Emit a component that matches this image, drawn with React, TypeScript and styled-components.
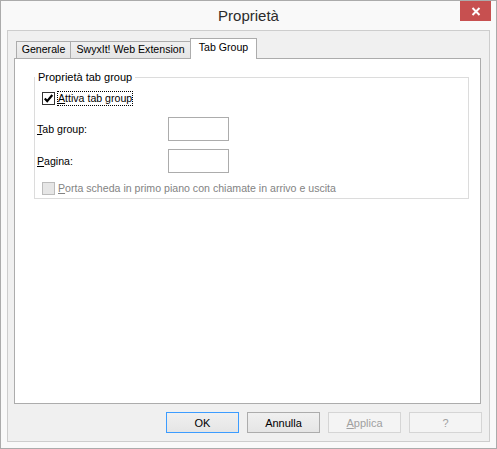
import styled, { createGlobalStyle } from 'styled-components';

const GlobalStyle = createGlobalStyle`
    html, body {
        margin: 0;
        padding: 0;
        background: #ffffff;
    }
    body {
        font-family: "Liberation Sans", Arial, sans-serif;
        font-size: 10.6px;
        color: #000000;
    }
    * {
        box-sizing: border-box;
    }
`;

const tabs = [
    { label: 'Generale', width: 55 },
    { label: 'SwyxIt! Web Extension', width: 121 },
    { label: 'Tab Group', width: 67, active: true },
];

const buttons = [
    { label: 'OK', isDefault: true },
    { label: 'Annulla' },
    { label: 'Applica', mnemonic: true, disabled: true },
    { label: '?', disabled: true },
];

const CheckIcon = () => (
    <svg width="11" height="11" viewBox="0 0 11 11">
        <path d="M1.8 5.6 L4.2 8.2 L9.3 2" fill="none" stroke="#000" strokeWidth="2.2" />
    </svg>
);

const CloseIcon = () => (
    <svg width="10" height="9" viewBox="0 0 10 9">
        <path d="M1.5 1 L8.5 8 M8.5 1 L1.5 8" stroke="#fff" strokeWidth="2" />
    </svg>
);

const Proprieta = () => {
    return (
        <Window>
            <TitleBar>
                <span />
                <Title>Proprietà</Title>
                <CloseButton>
                    <CloseIcon />
                </CloseButton>
            </TitleBar>
            <Client>
                <TabControl>
                    <TabRow>
                        {tabs.map((tab) => (
                            <Tab key={tab.label} $active={tab.active} $width={tab.width}>
                                {tab.label}
                            </Tab>
                        ))}
                    </TabRow>
                    <TabPanel>
                        <GroupBox>
                            <Legend>Proprietà tab group</Legend>
                            <CheckRow>
                                <CheckBox>
                                    <CheckIcon />
                                </CheckBox>
                                <CheckLabel $focused>
                                    <u>A</u>ttiva tab group
                                </CheckLabel>
                            </CheckRow>
                            <FieldRow>
                                <FieldLabel>
                                    <u>T</u>ab group:
                                </FieldLabel>
                                <TextBox />
                            </FieldRow>
                            <FieldRow>
                                <FieldLabel>
                                    <u>P</u>agina:
                                </FieldLabel>
                                <TextBox />
                            </FieldRow>
                            <CheckRow $spaced>
                                <CheckBox $disabled />
                                <CheckLabel $disabled>
                                    <u>P</u>orta scheda in primo piano con chiamate in arrivo e uscita
                                </CheckLabel>
                            </CheckRow>
                        </GroupBox>
                    </TabPanel>
                </TabControl>
                <ButtonRow>
                    {buttons.map((b) => (
                        <DialogButton key={b.label} $default={b.isDefault} $disabled={b.disabled}>
                            {b.mnemonic ? (
                                <>
                                    <u>{b.label[0]}</u>
                                    {b.label.slice(1)}
                                </>
                            ) : (
                                b.label
                            )}
                        </DialogButton>
                    ))}
                </ButtonRow>
            </Client>
        </Window>
    );
};

const App = () => (
    <>
        <GlobalStyle />
        <Proprieta />
    </>
);

const Window = styled.div`
    width: 497px;
    height: 449px;
    border: 1px solid #ababab;
    background: #f9f9f9;
    display: flex;
    flex-direction: column;
`;

const TitleBar = styled.div`
    height: 29px;
    display: grid;
    grid-template-columns: 1fr auto 1fr;
    align-items: start;
`;

const Title = styled.div`
    font-size: 15px;
    line-height: 29px;
    color: #2b2b2b;
`;

const CloseButton = styled.div`
    justify-self: end;
    width: 31px;
    height: 20px;
    margin-right: 5px;
    background: #c75050;
    display: flex;
    align-items: center;
    justify-content: center;
`;

const Client = styled.div`
    flex: 1;
    margin: 0 6px 6px;
    border: 1px solid #cdcdcd;
    background: #f0f0f0;
    padding: 7px 7px 8px 6px;
    display: flex;
    flex-direction: column;
`;

const TabControl = styled.div`
    flex: 1;
    margin-right: 1px;
    display: flex;
    flex-direction: column;
`;

const TabRow = styled.div`
    height: 20px;
    padding-left: 2px;
    display: flex;
    align-items: flex-end;
`;

const Tab = styled.div<{ $active?: boolean; $width: number }>`
    width: ${({ $width }) => $width}px;
    height: ${({ $active }) => ($active ? 21 : 17)}px;
    margin-left: -1px;
    margin-bottom: ${({ $active }) => ($active ? -1 : 0)}px;
    border: 1px solid #acacac;
    border-bottom: none;
    background: ${({ $active }) => ($active ? '#ffffff' : 'linear-gradient(#f0f0f0, #e5e5e5)')};
    position: relative;
    z-index: ${({ $active }) => ($active ? 1 : 0)};
    display: flex;
    justify-content: center;
    padding-top: ${({ $active }) => ($active ? 2 : 1)}px;
    line-height: 13px;
    white-space: nowrap;

    &:first-child {
        margin-left: 0;
    }
`;

const TabPanel = styled.div`
    flex: 1;
    border: 1px solid #acacac;
    background: #ffffff;
    padding: 12px 11px 0 19px;
`;

const GroupBox = styled.fieldset`
    margin: 0;
    border: 1px solid #dcdcdc;
    padding: 7px 0 2px 0;
    min-inline-size: 0;
`;

const Legend = styled.legend`
    margin-left: 0;
    padding: 0 3px;
    line-height: 13px;
    font-size: 11px;
`;

const CheckRow = styled.div<{ $spaced?: boolean }>`
    height: 15px;
    margin-top: ${({ $spaced }) => ($spaced ? 8 : 0)}px;
    padding-left: 7px;
    display: flex;
    align-items: center;
    gap: 2px;
`;

const CheckBox = styled.span<{ $disabled?: boolean }>`
    width: 13px;
    height: 13px;
    border: 1px solid ${({ $disabled }) => ($disabled ? '#bcbcbc' : '#333333')};
    background: ${({ $disabled }) => ($disabled ? '#e6e6e6' : '#ffffff')};
    display: flex;
    align-items: center;
    justify-content: center;
`;

const CheckLabel = styled.span<{ $focused?: boolean; $disabled?: boolean }>`
    border: 1px dotted ${({ $focused }) => ($focused ? '#000000' : 'transparent')};
    line-height: 13px;
    color: ${({ $disabled }) => ($disabled ? '#838383' : '#000000')};
    white-space: nowrap;
`;

const FieldRow = styled.div`
    height: 24px;
    margin-top: 11px;
    padding-left: 2px;
    display: flex;
    align-items: center;

    & + & {
        margin-top: 8px;
    }
`;

const FieldLabel = styled.span`
    width: 131px;
`;

const TextBox = styled.div`
    width: 61px;
    height: 24px;
    border: 1px solid #acacac;
    background: #ffffff;
`;

const ButtonRow = styled.div`
    margin-top: 8px;
    display: flex;
    justify-content: flex-end;
    gap: 8px;
`;

const DialogButton = styled.div<{ $default?: boolean; $disabled?: boolean }>`
    width: 73px;
    height: 21px;
    font-size: 11px;
    border: 1px solid
        ${({ $default, $disabled }) => ($default ? '#3c9cff' : $disabled ? '#d5d5d5' : '#acacac')};
    background: ${({ $disabled }) => ($disabled ? '#f4f4f4' : 'linear-gradient(#f0f0f0, #e5e5e5)')};
    color: ${({ $disabled }) => ($disabled ? '#a0a0a0' : '#000000')};
    display: flex;
    align-items: center;
    justify-content: center;
`;

export default App;
